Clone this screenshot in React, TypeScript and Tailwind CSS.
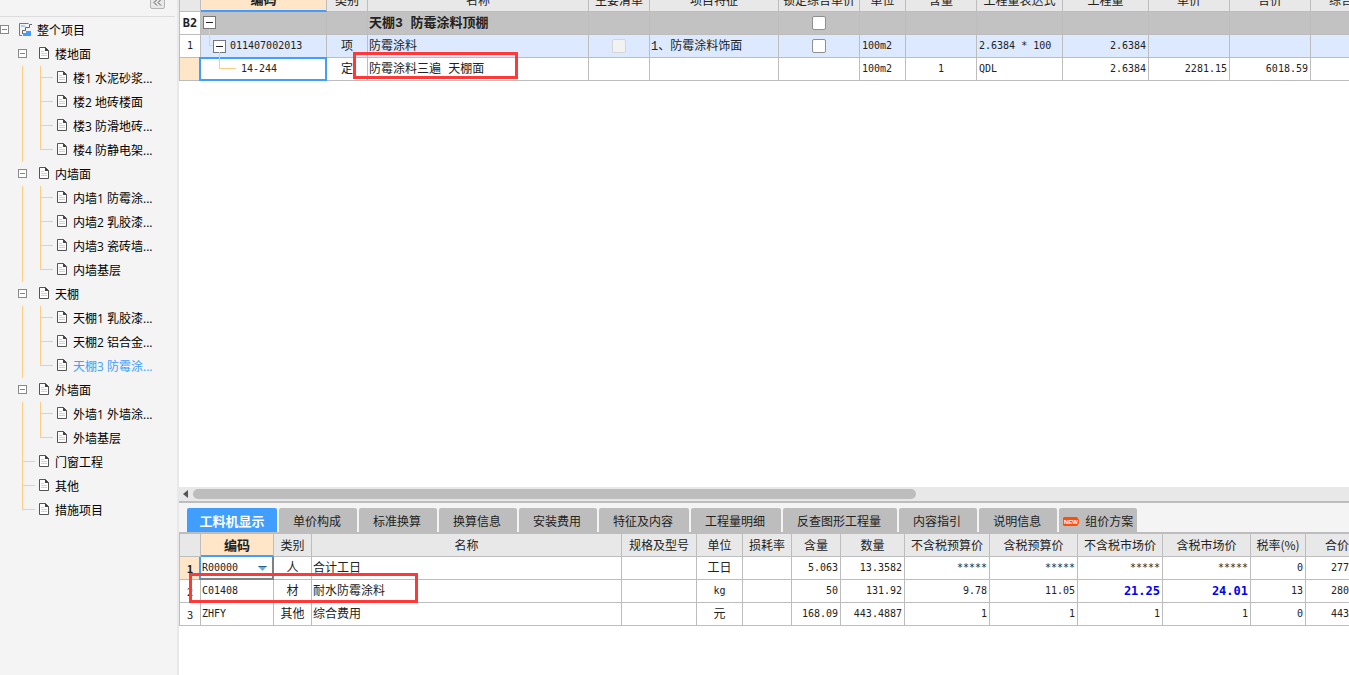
import { useState } from "react";
import type { ReactNode } from "react";
import clsx from "clsx";

type TreeNode = { label: string; children?: string[] };

const tree: TreeNode[] = [
  {
    label: "楼地面",
    children: ["楼1 水泥砂浆...", "楼2 地砖楼面", "楼3 防滑地砖...", "楼4 防静电架..."],
  },
  {
    label: "内墙面",
    children: ["内墙1 防霉涂...", "内墙2 乳胶漆...", "内墙3 瓷砖墙...", "内墙基层"],
  },
  {
    label: "天棚",
    children: ["天棚1 乳胶漆...", "天棚2 铝合金...", "天棚3 防霉涂..."],
  },
  { label: "外墙面", children: ["外墙1 外墙涂...", "外墙基层"] },
  { label: "门窗工程" },
  { label: "其他" },
  { label: "措施项目" },
];

const tabs = [
  "工料机显示",
  "单价构成",
  "标准换算",
  "换算信息",
  "安装费用",
  "特征及内容",
  "工程量明细",
  "反查图形工程量",
  "内容指引",
  "说明信息",
  "组价方案",
];

const topColumns = [
  { label: "", width: "w-[21px]" },
  { label: "编码", width: "w-[126px]" },
  { label: "类别", width: "w-[41px]" },
  { label: "名称", width: "w-[221px]" },
  { label: "主要清单", width: "w-[61px]" },
  { label: "项目特征", width: "w-[129px]" },
  { label: "锁定综合单价", width: "w-[81px]" },
  { label: "单位", width: "w-[46px]" },
  { label: "含量", width: "w-[71px]" },
  { label: "工程量表达式", width: "w-[86px]" },
  { label: "工程量", width: "w-[86px]" },
  { label: "单价", width: "w-[81px]" },
  { label: "合价", width: "w-[81px]" },
  { label: "综合", width: "w-auto" },
];

const bottomColumns = [
  { label: "", width: "w-[21px]" },
  { label: "编码", width: "w-[73px]" },
  { label: "类别", width: "w-[38px]" },
  { label: "名称", width: "w-[310px]" },
  { label: "规格及型号", width: "w-[75px]" },
  { label: "单位", width: "w-[46px]" },
  { label: "损耗率", width: "w-[49px]" },
  { label: "含量", width: "w-[49px]" },
  { label: "数量", width: "w-[64px]" },
  { label: "不含税预算价", width: "w-[85px]" },
  { label: "含税预算价", width: "w-[88px]" },
  { label: "不含税市场价", width: "w-[85px]" },
  { label: "含税市场价", width: "w-[88px]" },
  { label: "税率(%)", width: "w-[55px]" },
  { label: "合价", width: "w-auto" },
];

const resources = [
  {
    code: "R00000",
    kind: "人",
    name: "合计工日",
    unit: "工日",
    values: ["5.063", "13.3582", "*****", "*****", "*****", "*****", "0"],
    total: "277",
  },
  {
    code: "C01408",
    kind: "材",
    name: "耐水防霉涂料",
    unit: "kg",
    values: ["50", "131.92", "9.78", "11.05", "21.25", "24.01", "13"],
    total: "280",
  },
  {
    code: "ZHFY",
    kind: "其他",
    name: "综合费用",
    unit: "元",
    values: ["168.09", "443.4887", "1", "1", "1", "1", "0"],
    total: "443",
  },
];

const monoFont = "font-['DejaVu_Sans_Mono','Noto_Sans_CJK_SC',monospace]";
const mono = `${monoFont} text-[10px]`;
const cjk = "pb-0.5";
const nameText = "font-['Liberation_Mono','Noto_Sans_CJK_SC',monospace] pt-px pl-px";

const PageIcon = () => (
  <svg
    width="10"
    height="12"
    viewBox="0 0 10 12"
    fill="none"
    className="mr-px mb-0.5 shrink-0"
  >
    <path d="M.5.5H6.5L9.5 3.500V11.500H.5Z" fill="#fff" stroke="#555" />
    <path d="M6 0L10 4H6Z" fill="#444" />
    <path d="M2 4.500H5M2 6.500H8M2 8.500H8" stroke="#d0d0d0" />
  </svg>
);

const ProjectIcon = () => (
  <svg
    width="13"
    height="13"
    viewBox="0 0 13 13"
    fill="none"
    className="mb-px shrink-0"
  >
    <path d="M9.500.5H.5V12.500H3" stroke="#777" />
    <path d="M2 2h4v2H2z" fill="#a9cdf8" />
    <path d="M13 1.500H10.500V4.500H6.500V7.500H3.500V11" stroke="#666" />
    <path d="M4 10H7V8H12V13H4Z" fill="#409eff" />
  </svg>
);

const TreeToggle = ({ label }: { label: string }) => (
  <button
    type="button"
    aria-label={`折叠 ${label}`}
    className="mb-px flex size-[9px] shrink-0 items-center justify-center border border-[#8a8a8a] bg-white"
  >
    <span className="h-px w-[5px] bg-[#2fa4d0]" />
  </button>
);

const Branch = ({ last }: { last?: boolean }) => (
  <span className="flex h-6 w-[13px] shrink-0 flex-col">
    <span className="h-3 border-b border-l border-[#fc8]" />
    <span className={clsx("h-3", !last && "border-l border-[#fc8]")} />
  </span>
);

const Sidebar = () => {
  const [selected, setSelected] = useState("天棚3 防霉涂...");

  return (
    <aside className="w-[179px] shrink-0 overflow-hidden border-r-2 border-[#e8e8e8] bg-[#f4f4f4] font-['Open_Sans','Noto_Sans_CJK_SC',sans-serif] text-xs text-black">
      <div className="mr-0.5 flex h-[17px] items-start justify-end border-b border-[#ddd] pr-2.5">
        <button
          type="button"
          aria-label="收起"
          className="-mt-1 flex h-[13px] w-[15px] items-center justify-center rounded-xs border border-[#b5b5b5] bg-[#e8e8e8]"
        >
          <svg width="9" height="7" viewBox="0 0 9 7" fill="none" stroke="#555">
            <path d="M4 .5L1 3.500L4 6.500M8 .5L5 3.500L8 6.500" />
          </svg>
        </button>
      </div>
      <div className="mt-px flex h-6 items-center">
        <TreeToggle label="整个项目" />
        <span className="ml-2.5">
          <ProjectIcon />
        </span>
        <span className="ml-[5px] pt-0.5">整个项目</span>
      </div>
      <ul className="pl-[18px]">
        {tree.map((node, index) => (
          <li key={node.label}>
            <div className="flex h-6 items-center">
              {node.children ? (
                <span className="flex w-[21px]">
                  <TreeToggle label={node.label} />
                </span>
              ) : (
                <span className="w-[21px] pl-1">
                  <Branch last={index === tree.length - 1} />
                </span>
              )}
              <PageIcon />
              <span className="ml-[5px] pt-0.5">{node.label}</span>
            </div>
            {node.children && (
              <ul className="ml-1 border-l border-[#fc8] pl-[17px]">
                {node.children.map((child, i) => (
                  <li key={child}>
                    <button
                      type="button"
                      onClick={() => setSelected(child)}
                      className={clsx(
                        "flex h-6 items-center whitespace-nowrap",
                        child === selected && "text-[#409eff]"
                      )}
                    >
                      <Branch last={i === node.children!.length - 1} />
                      <span className="ml-1">
                        <PageIcon />
                      </span>
                      <span className="ml-[5px] pt-0.5">{child}</span>
                    </button>
                  </li>
                ))}
              </ul>
            )}
          </li>
        ))}
      </ul>
    </aside>
  );
};

const Cell = ({
  children,
  className,
}: {
  children?: ReactNode;
  className?: string;
}) => (
  <td
    className={clsx(
      "h-[23px] border-r border-b border-[#bdbdbd] leading-4 whitespace-nowrap last:border-r-0",
      className
    )}
  >
    {children}
  </td>
);

const HeaderRow = ({
  columns,
  className,
}: {
  columns: { label: string; width: string }[];
  className: string;
}) => (
  <thead>
    <tr>
      {columns.map(({ label, width }, index) => (
        <th
          key={index}
          scope="col"
          className={clsx(
            "overflow-hidden border-r border-b p-0 leading-4 whitespace-nowrap last:border-r-0",
            width,
            className,
            label === "编码"
              ? "border-r-[#bdbdbd] border-b-2 border-b-[#409eff] bg-[#ffe6c8] text-[13px] font-bold"
              : "border-[#bdbdbd] bg-[#e8e8e8] font-normal",
            label === "综合" && "pl-[18px] text-left",
            label !== "综合" && (index === columns.length - 1 ? "text-right" : "text-center")
          )}
        >
          {label}
        </th>
      ))}
    </tr>
  </thead>
);

const RowToggle = ({ label }: { label: string }) => (
  <button
    type="button"
    aria-label={label}
    className="flex size-[13px] items-center justify-center border border-[#777] bg-white"
  >
    <span className="h-px w-[7px] bg-[#222]" />
  </button>
);

const Check = ({ label, disabled }: { label: string; disabled?: boolean }) => (
  <input
    type="checkbox"
    aria-label={label}
    disabled={disabled}
    className="mx-auto block size-3.5 appearance-none rounded-xs border border-[#8f8f8f] bg-white checked:bg-[#409eff] disabled:border-[#d5d5d5] disabled:bg-[#f2f2f2]"
  />
);

const Mark = ({ className }: { className: string }) => (
  <span
    className={clsx(
      "pointer-events-none absolute z-10 border-3 border-[#ff3838]",
      className
    )}
  />
);

const ItemTable = () => (
  <table className="-mt-3 w-full table-fixed border-separate border-spacing-0 border-l border-[#bdbdbd]">
    <HeaderRow columns={topColumns} className="h-6" />
    <tbody>
      <tr className="bg-[#c2c2c2]">
        <Cell className={clsx(monoFont, "bg-white text-center text-xs font-bold")}>B2</Cell>
        <Cell className="relative pb-px pl-0.5">
          <RowToggle label="折叠 天棚3" />
          <span className="absolute top-[17px] left-2 z-10 h-[17px] w-1 border-b border-l border-[#fc8]" />
        </Cell>
        <Cell />
        <Cell className={clsx(nameText, "text-[13px] font-bold")}>天棚3 防霉涂料顶棚</Cell>
        <Cell />
        <Cell />
        <Cell>
          <Check label="锁定综合单价 天棚3" />
        </Cell>
        <Cell />
        <Cell />
        <Cell />
        <Cell />
        <Cell />
        <Cell />
        <Cell />
      </tr>
      <tr className="bg-[#dce9fe]">
        <Cell className={clsx(mono, "bg-white text-center")}>1</Cell>
        <Cell className={clsx(mono, "relative pl-3")}>
          <span className="flex items-center gap-1">
            <RowToggle label="折叠 011407002013" />
            011407002013
          </span>
          <span className="absolute top-[17px] left-[18px] z-10 h-[17px] w-[17px] border-b border-l border-[#fc8]" />
        </Cell>
        <Cell className={clsx(cjk, "text-center")}>项</Cell>
        <Cell className={nameText}>防霉涂料</Cell>
        <Cell>
          <Check label="主要清单" disabled />
        </Cell>
        <Cell className={nameText}>1、防霉涂料饰面</Cell>
        <Cell>
          <Check label="锁定综合单价 防霉涂料" />
        </Cell>
        <Cell className={clsx(mono, "pl-0.5")}>100m2</Cell>
        <Cell />
        <Cell className={clsx(mono, "pl-0.5")}>2.6384 * 100</Cell>
        <Cell className={clsx(mono, "pr-0.5 text-right")}>2.6384</Cell>
        <Cell />
        <Cell />
        <Cell />
      </tr>
      <tr>
        <Cell className="bg-[#ffe6c8]" />
        <Cell className={clsx(mono, "relative pl-10")}>
          14-244
          <span className="absolute -top-px -right-px -bottom-px -left-0.5 border-2 border-[#409eff]" />
        </Cell>
        <Cell className={clsx(cjk, "text-center")}>定</Cell>
        <Cell className={clsx(nameText, "relative")}>
          防霉涂料三遍 天棚面
          <Mark className="-top-1.5 -left-[15px] h-[27px] w-[165px]" />
        </Cell>
        <Cell />
        <Cell />
        <Cell />
        <Cell className={clsx(mono, "pl-0.5")}>100m2</Cell>
        <Cell className={clsx(mono, "text-center")}>1</Cell>
        <Cell className={clsx(mono, "pl-0.5")}>QDL</Cell>
        <Cell className={clsx(mono, "pr-0.5 text-right")}>2.6384</Cell>
        <Cell className={clsx(mono, "pr-0.5 text-right")}>2281.15</Cell>
        <Cell className={clsx(mono, "pr-0.5 text-right")}>6018.59</Cell>
        <Cell />
      </tr>
    </tbody>
  </table>
);

const ResourceTable = () => (
  <table className="w-full table-fixed border-separate border-spacing-0 border-l border-[#bdbdbd]">
    <HeaderRow columns={bottomColumns} className="h-[23px]" />
    <tbody>
      {resources.map((row, index) => (
        <tr key={row.code} className="bg-white">
          <Cell
            className={clsx(
              "text-center text-[11px]",
              index === 0 && "bg-[#ffe6c8] font-bold"
            )}
          >
            {index + 1}
          </Cell>
          {index === 0 ? (
            <Cell className={clsx(mono, "relative")}>
              <select
                aria-label="编码"
                className="block h-[22px] w-full appearance-none pl-px"
              >
                <option>{row.code}</option>
              </select>
              <svg
                width="9"
                height="5"
                viewBox="0 0 9 5"
                className="pointer-events-none absolute top-[9px] right-1.5"
              >
                <path d="M0 0H9L4.500 5Z" fill="#6fa9d8" />
                <path d="M0 0H9L8 1H1Z" fill="#24618f" />
              </svg>
              <span className="pointer-events-none absolute top-0 -right-px -bottom-px -left-0.5 border-r-2 border-b-2 border-l-2 border-[#808080] border-l-[#409eff]" />
            </Cell>
          ) : (
            <Cell className={clsx(mono, "relative pl-px")}>
              {row.code}
              {index === 1 && (
                <Mark className="-top-[7px] -left-3 h-[30px] w-[229px]" />
              )}
            </Cell>
          )}
          <Cell className={clsx(cjk, "text-center")}>{row.kind}</Cell>
          <Cell className={nameText}>{row.name}</Cell>
          <Cell />
          <Cell className={clsx("text-center", row.unit === "kg" ? mono : cjk)}>
            {row.unit}
          </Cell>
          <Cell />
          {row.values.map((value, i) => {
            const edited = index === 1 && (i === 4 || i === 5);
            return (
              <Cell
                key={i}
                className={clsx(
                  monoFont,
                  "pr-0.5 text-right",
                  edited ? "text-xs font-bold text-[#0000f0]" : "text-[10px]"
                )}
              >
                {value}
              </Cell>
            );
          })}
          <Cell className={clsx(mono, "text-right")}>{row.total}</Cell>
        </tr>
      ))}
    </tbody>
  </table>
);

const NewBadge = () => (
  <svg width="16" height="9" viewBox="0 0 16 9" fill="none">
    <path d="M1 0H14L16 3V6L14 9H1L0 8V1Z" fill="#ff5000" />
    <text
      x="8"
      y="7"
      fill="#fff"
      fontSize="6"
      fontWeight="bold"
      textAnchor="middle"
      fontFamily="Liberation Sans, sans-serif"
    >
      NEW
    </text>
  </svg>
);

const DetailTabs = () => {
  const [active, setActive] = useState(tabs[0]);

  return (
    <div
      role="tablist"
      className="flex gap-0.5 border-b-2 border-[#bdbdbd] bg-[#f4f4f4] pt-[5px] pl-2"
    >
      {tabs.map((tab) => (
        <button
          key={tab}
          type="button"
          role="tab"
          aria-selected={tab === active}
          onClick={() => setActive(tab)}
          className={clsx(
            "flex h-6 shrink-0 items-center justify-center rounded-t-xs pt-0.5 whitespace-nowrap",
            tab === active
              ? "min-w-[90px] bg-[#409eff] px-3 text-[13px] font-bold text-white"
              : "bg-[#bdbdbd]",
            tab !== active && (tab === "组价方案" ? "gap-1.5 pr-1 pl-1" : "pr-4 pl-3.5")
          )}
        >
          {tab === "组价方案" && <NewBadge />}
          {tab}
        </button>
      ))}
    </div>
  );
};

export default function App() {
  return (
    <div className="flex h-screen overflow-hidden bg-white font-['Noto_Sans_CJK_SC',sans-serif] text-xs text-[#222]">
      <Sidebar />
      <main className="flex min-w-0 flex-1 flex-col">
        <section className="min-h-0 flex-1 overflow-hidden">
          <ItemTable />
        </section>
        <div className="flex h-3.5 shrink-0 items-center bg-[#e8e8e8] pl-1">
          <svg width="5" height="8" viewBox="0 0 5 8">
            <path d="M5 0V8L0 4Z" fill="#555" />
          </svg>
          <div className="ml-[5px] h-2.5 w-[62%] rounded-full bg-[#bdbdbd]" />
        </div>
        <section className="shrink-0 overflow-hidden border-t-2 border-[#bdbdbd] pb-[49px]">
          <DetailTabs />
          <ResourceTable />
        </section>
      </main>
    </div>
  );
}
